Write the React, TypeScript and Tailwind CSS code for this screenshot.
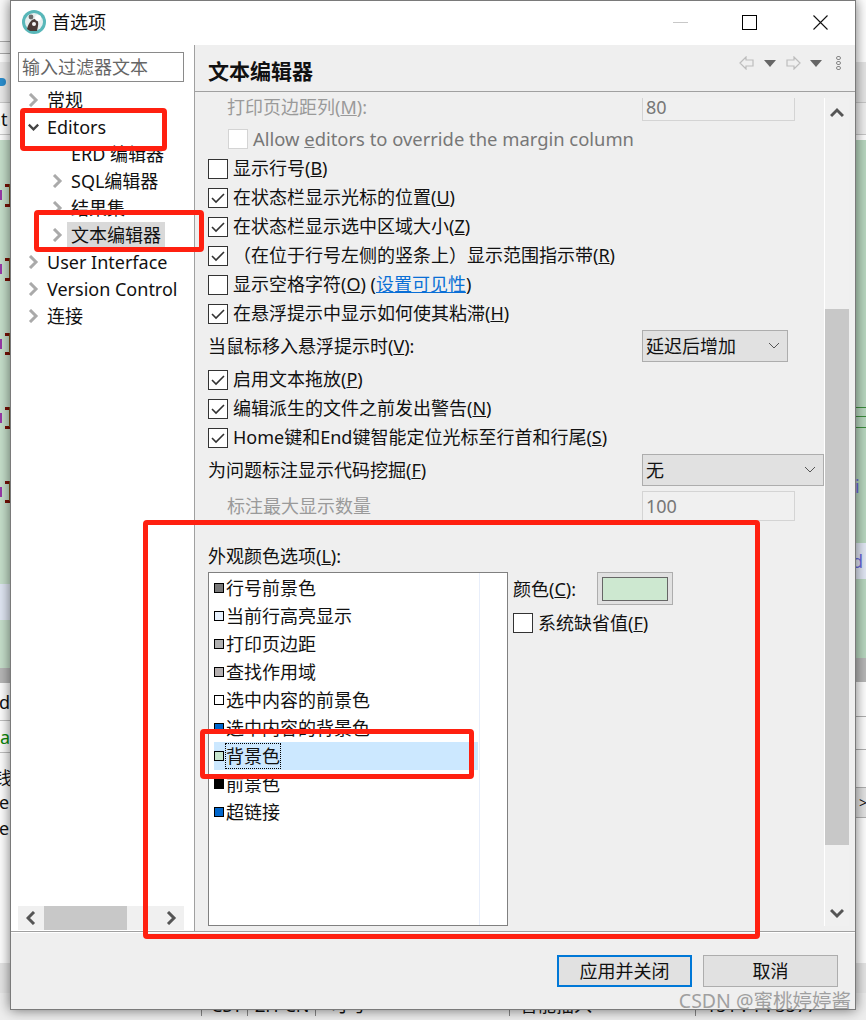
import React from "react";

const Chev = ({ dir = "right", color = "#aaaaaa", className = "" }: { dir?: "right" | "down" | "left" | "up"; color?: string; className?: string }) => {
  const pts = { right: "2,1 8,7 2,13", left: "8,1 2,7 8,13", down: "1,3 7,9 13,3", up: "1,9 7,3 13,9" }[dir];
  const horiz = dir === "right" || dir === "left";
  return (
    <svg width={horiz ? 11 : 14} height={horiz ? 14 : 12} viewBox={horiz ? "0 0 11 14" : "0 0 14 12"} className={className}>
      <polyline points={pts} fill="none" stroke={color} strokeWidth="3" />
    </svg>
  );
};

const Check = ({ checked = false, disabled = false }: { checked?: boolean; disabled?: boolean }) => (
  <span className={`flex w-[20px] h-[20px] shrink-0 items-center justify-center border bg-white ${disabled ? "border-[#d4d4d4] bg-[#f7f7f7]" : "border-[#333333]"}`}>
    {checked && (
      <svg width="14" height="12" viewBox="0 0 14 12">
        <polyline points="1,6 5,10 13,2" fill="none" stroke="#333333" strokeWidth="1.6" />
      </svg>
    )}
  </span>
);

const CheckRow = ({ checked, children }: { checked?: boolean; children: React.ReactNode }) => (
  <div className="flex h-[29px] items-center gap-[5px] text-[#111111] whitespace-nowrap">
    <Check checked={checked} />
    <span className="-mt-[2px]">{children}</span>
  </div>
);

const Select = ({ label, className }: { label: string; className: string }) => (
  <div className={`flex h-[32px] items-center justify-between border border-[#adadad] bg-[#e1e1e1] pl-[3px] pr-[7px] ${className}`}>
    <span>{label}</span>
    <svg width="12" height="8" viewBox="0 0 12 8">
      <polyline points="1,1 6,6 11,1" fill="none" stroke="#555555" strokeWidth="1" />
    </svg>
  </div>
);

const TreeRow = ({
  label, level = 1, chev = "right", selected = false,
}: { label: string; level?: 1 | 2; chev?: "right" | "down" | "none"; selected?: boolean }) => (
  <div className={`flex h-[27px] items-center gap-[4px] whitespace-nowrap text-[#111111] ${level === 1 ? "pl-[17px]" : "pl-[41px]"}`}>
    <span className="flex w-[11px] justify-center">
      {chev === "right" && <Chev color="#aaaaaa" />}
      {chev === "down" && <Chev dir="down" color="#444444" />}
    </span>
    <span className={`flex h-[25px] items-center px-[4px] ${selected ? "bg-[#d9d9d9]" : ""}`}>{label}</span>
  </div>
);

const colors: [string, string, boolean?][] = [
  ["行号前景色", "#787878"],
  ["当前行高亮显示", "#e8f2fe"],
  ["打印页边距", "#b0b0b0"],
  ["查找作用域", "#b5b0b0"],
  ["选中内容的前景色", "#ffffff"],
  ["选中内容的背景色", "#0066cc"],
  ["背景色", "#c7e6ce", true],
  ["前景色", "#000000"],
  ["超链接", "#0066cc"],
];

const ticks = [184, 204, 258, 278, 333, 352, 407, 426, 481, 500];
const pairs = [184, 258, 333, 407, 481];

const Backdrop = () => (
  <div className="absolute inset-0 flex flex-col bg-white">
    <div className="flex flex-1 justify-between">
      <div className="flex w-[10px] flex-col text-[#111111] overflow-hidden">
        <div className="h-[41px] bg-[#fafafa]" />
        <div className="h-[13px] border-y border-[#aaaaaa] bg-[#f5f5f5]" />
        <div className="h-[8px]" />
        <div className="flex h-[40px] items-center bg-[#ececec]"><span className="h-[8px] w-[6px] rounded-r-full bg-[#2a8fd0]" /></div>
        <div className="flex h-[33px] items-center border-y border-[#cccccc] pl-0"><span className="-ml-[9px]">at</span></div>
        <div className="h-[5px]" />
        <div className="relative flex h-[528px] flex-col bg-[#c7e0cc]">
          {ticks.map((t) => (
            <span key={t} className="absolute left-[5px] h-[3px] w-[5px] bg-[#7a1005]" style={{ top: t - 140 }} />
          ))}
          {pairs.map((t) => (
            <React.Fragment key={t}>
              <span className="absolute left-[9px] h-[20px] w-[1px] bg-[#7a5a20]" style={{ top: t - 140 }} />
              <span className="absolute left-0 h-[10px] w-[2px] bg-[#9a3aa8]" style={{ top: t - 134 }} />
            </React.Fragment>
          ))}
          <div className="mt-[444px] h-[36px] bg-[#e2e8f5]" />
        </div>
        <div className="h-[15px] bg-[#b8b8b8]" />
        <div className="flex h-[38px] items-center border-b border-[#c0c0c0]"><span className="-ml-[1px]">d</span></div>
        <div className="flex h-[32px] items-center border-b border-[#c0c0c0] text-[#0a8a0a]"><span className="-ml-[11px]">na</span></div>
        <div className="flex h-[88px] flex-col pt-[14px] leading-[26px]">
          <span className="-ml-[6px] h-[22px] leading-[22px]">钱</span>
          <span className="-ml-[1px]">e</span>
          <span className="-ml-[1px]">e</span>
        </div>
        <div className="h-[122px]" />
        <div className="h-[30px] bg-[#e6e6e6]" />
        <div className="flex-1 bg-[#eeeeee]" />
      </div>
      <div className="flex w-[10px] flex-col overflow-hidden text-[#111111]">
        <div className="h-[62px]" />
        <div className="h-[41px] border-b border-[#c8c8c8] bg-[#e6e6e6]" />
        <div className="h-[32px] border-b border-[#c8c8c8] bg-[#f0f0f0]" />
        <div className="h-[5px]" />
        <div className="flex h-[518px] flex-col bg-[#b9d8c0]">
          <div className="mt-[267px] h-[1px] bg-[#3c8c3c]" />
          <div className="mt-[8px] h-[1px] bg-[#3c8c3c]" />
          <div className="mt-[10px] h-[1px] bg-[#3c8c3c]" />
          <div className="mt-[43px] flex h-[30px] items-center text-[#6a6ae0]"><span className="-ml-[1px]">i</span></div>
          <div className="mt-[42px] flex h-[36px] items-center bg-[#e2e8f5] text-[#6a6ae0]"><span className="-ml-[4px]">d</span></div>
        </div>
        <div className="h-[24px] bg-[#b8b8b8]" />
        <div className="h-[35px] border-b border-[#b0b0b0]" />
        <div className="h-[33px] border-b border-[#b0b0b0]" />
        <div className="h-[37px]" />
        <div className="flex h-[31px] items-center border-y border-[#b0b0b0] bg-[#e4e4e4] text-[14px]"><span className="ml-[3px]">&gt;</span></div>
        <div className="h-[145px]" />
        <div className="h-[30px] bg-[#e6e6e6]" />
        <div className="flex-1 bg-[#eeeeee]" />
      </div>
    </div>
    <div className="-mt-[20px] flex h-[20px] items-start overflow-hidden bg-[#eeeeee] text-[#111111] leading-[10px] whitespace-nowrap">
      <span className="ml-[201px] h-[16px] w-[47px] border-x border-[#888888] pl-[9px]">CST</span>
      <span className="h-[16px] w-[68px] border-r border-[#888888] pl-[7px]">ZH-CN</span>
      <span className="h-[16px] w-[194px] border-r border-[#888888] pl-[14px]">可写</span>
      <span className="h-[16px] w-[186px] border-r border-[#888888] pl-[10px]">智能插入</span>
      <span className="h-[16px] pl-[10px]">151 : 1 : 3577</span>
    </div>
  </div>
);

const NavArrow = ({ flip = false }: { flip?: boolean }) => (
  <svg width="15" height="14" viewBox="0 0 15 14" className={flip ? "-scale-x-100" : ""}>
    <path d="M1 7 L7 1 V4 H14 V10 H7 V13 Z" fill="none" stroke="#bdbdbd" strokeWidth="1.2" />
  </svg>
);

const Tri = () => (
  <svg width="12" height="7" viewBox="0 0 12 7"><polygon points="0,0 12,0 6,7" fill="#666666" /></svg>
);

const Logo = () => (
  <svg width="24" height="24" viewBox="0 0 24 24">
    <circle cx="12" cy="12" r="12" fill="#58b7b9" />
    <circle cx="12" cy="12" r="9" fill="#e6eeee" />
    <path d="M5 19 C7 12 10 9 13 9 C15 9 17 12 16 16 L15 21 L8 21 Z" fill="#4a3a36" />
    <circle cx="16" cy="8" r="3" fill="#ffffff" />
    <circle cx="9" cy="7" r="2.4" fill="#6b6b6b" />
    <circle cx="12" cy="14" r="2" fill="#f5f5f5" />
  </svg>
);

const RedBox = ({ className }: { className: string }) => (
  <div className={`pointer-events-none absolute rounded-[4px] border-[5px] border-[#ff2010] ${className}`} />
);

export default function App() {
  return (
    <div className="relative h-[1020px] w-[866px] overflow-hidden bg-white font-['Noto_Sans','Noto_Sans_CJK_SC',sans-serif] text-[18px] leading-[24px]">
      <Backdrop />
      <div className="relative ml-[10px] flex h-[1010px] w-[846px] flex-col border border-[#7a7a7a] bg-white shadow-[0_0_12px_rgba(0,0,0,0.55)]">
        {/* title bar */}
        <div className="flex h-[44px] shrink-0 items-center pb-[2px] pl-[11px] text-[#111111]">
          <Logo />
          <span className="ml-[6px]">首选项</span>
          <div className="ml-auto flex items-center">
            <span className="mr-[54px] h-[1px] w-[15px] bg-[#c8c8c8]" />
            <span className="mr-[56px] h-[15px] w-[15px] border-[1.5px] border-black" />
            <svg width="15" height="15" viewBox="0 0 15 15" className="mr-[27px]">
              <path d="M0.5 0.5 L14.5 14.5 M14.5 0.5 L0.5 14.5" stroke="#111111" strokeWidth="1.1" />
            </svg>
          </div>
        </div>

        {/* body */}
        <div className="flex h-[886px] shrink-0">
          {/* left */}
          <div className="flex w-[184px] shrink-0 flex-col border-r border-[#a0a0a0] pt-[7px]">
            <div className="mx-[7px] flex h-[30px] w-[166px] items-center border border-[#8a8a8a] pl-[3px] text-[#666666]">输入过滤器文本</div>
            <div className="mt-[4px] flex flex-col">
              <TreeRow label="常规" />
              <TreeRow label="Editors" chev="down" />
              <TreeRow label="ERD 编辑器" level={2} chev="none" />
              <TreeRow label="SQL编辑器" level={2} />
              <TreeRow label="结果集" level={2} />
              <TreeRow label="文本编辑器" level={2} selected />
              <TreeRow label="User Interface" />
              <TreeRow label="Version Control" />
              <TreeRow label="连接" />
            </div>
            <div className="mx-[7px] mb-[1px] mt-auto flex h-[24px] w-[166px] bg-[#f0f0f0]">
              <span className="flex w-[26px] items-center justify-center"><Chev dir="left" color="#555555" /></span>
              <span className="w-[83px] bg-[#c8c8c8]" />
              <span className="ml-auto flex w-[26px] items-center justify-center"><Chev dir="right" color="#555555" /></span>
            </div>
          </div>

          {/* right */}
          <div className="flex min-w-0 flex-1 flex-col bg-[#efefef] text-[#111111]">
            <div className="flex h-[47px] shrink-0 items-center border-b border-[#a0a0a0] pl-[13px]">
              <span className="mt-[6px] text-[21px] font-bold">文本编辑器</span>
              <div className="mb-[10px] ml-auto mr-[14px] flex items-center">
                <NavArrow />
                <span className="ml-[10px] mr-[10px] flex"><Tri /></span>
                <NavArrow flip />
                <span className="ml-[9px] mr-[14px] flex"><Tri /></span>
                <span className="flex flex-col gap-[1px]">
                  <span className="h-[4px] w-[5px] rounded-full border border-[#888888]" />
                  <span className="h-[4px] w-[5px] rounded-full border border-[#888888]" />
                  <span className="h-[4px] w-[5px] rounded-full border border-[#888888]" />
                </span>
              </div>
            </div>
            <div className="mt-[6px] flex h-[828px] shrink-0 pr-[6px]">
              <div className="flex min-w-0 flex-1 flex-col overflow-hidden pl-[13px]">
                <div className="-mt-[7px] flex h-[30px] shrink-0 items-center pl-[20px] text-[#9a9a9a]">
                  <span className="-ml-[1px] w-[415px] pt-[2px]">打印页边距列(<u>M</u>):</span>
                  <div className="flex h-[30px] w-[153px] items-center border border-[#d4d4d4] bg-[#f0f0f0] pl-[3px] pt-[2px] text-[#777777]">80</div>
                </div>
                <div className="mt-[3px] flex h-[30px] shrink-0 items-center gap-[5px] pl-[20px] text-[#777777] whitespace-nowrap">
                  <Check disabled />
                  <span className="text-[18.4px]">Allow <u>e</u>ditors to override the margin column</span>
                </div>
                <CheckRow>显示行号(<u>B</u>)</CheckRow>
                <CheckRow checked>在状态栏显示光标的位置(<u>U</u>)</CheckRow>
                <CheckRow checked>在状态栏显示选中区域大小(<u>Z</u>)</CheckRow>
                <CheckRow checked>（在位于行号左侧的竖条上）显示范围指示带(<u>R</u>)</CheckRow>
                <CheckRow>显示空格字符(<u>O</u>) (<span className="text-[#0a6fd6] underline">设置可见性</span>)</CheckRow>
                <CheckRow checked>在悬浮提示中显示如何使其粘滞(<u>H</u>)</CheckRow>
                <div className="mt-[2px] flex h-[32px] shrink-0 items-center">
                  <span className="w-[434px]">当鼠标移入悬浮提示时(<u>V</u>):</span>
                  <Select label="延迟后增加" className="w-[146px]" />
                </div>
                <div className="mt-[3px] flex flex-col">
                  <CheckRow checked>启用文本拖放(<u>P</u>)</CheckRow>
                  <CheckRow checked>编辑派生的文件之前发出警告(<u>N</u>)</CheckRow>
                  <CheckRow checked>Home键和End键智能定位光标至行首和行尾(<u>S</u>)</CheckRow>
                </div>
                <div className="mt-[2px] flex h-[32px] shrink-0 items-center">
                  <span className="w-[434px]">为问题标注显示代码挖掘(<u>F</u>)</span>
                  <Select label="无" className="w-[182px]" />
                </div>
                <div className="mt-[5px] flex h-[30px] shrink-0 items-center pl-[20px] text-[#9a9a9a]">
                  <span className="-ml-[1px] w-[415px]">标注最大显示数量</span>
                  <div className="flex h-[30px] w-[153px] items-center border border-[#d4d4d4] bg-[#f0f0f0] pl-[3px] text-[#777777]">100</div>
                </div>
                <div className="mt-[20px] flex h-[29px] shrink-0 items-center">外观颜色选项(<u>L</u>):</div>
                <div className="mt-[2px] flex min-h-0 flex-1">
                  <div className="relative h-[354px] w-[300px] border border-[#808080] bg-white pl-[5px] pt-[1px]">
                    <div className="absolute bottom-0 right-[27px] top-0 w-[1px] bg-[#e8eefa]" />
                    {colors.map(([label, color, sel]) => (
                      <div key={label} className={`relative flex h-[28px] w-[264px] items-center whitespace-nowrap ${sel ? "bg-[#cce8ff]" : ""}`}>
                        <span className="h-[10px] w-[10px] shrink-0 border border-black" style={{ backgroundColor: color }} />
                        <span className={`flex h-[26px] items-center ${sel ? "ml-[1px] border border-dotted border-black" : "ml-[2px]"}`}>{label}</span>
                      </div>
                    ))}
                  </div>
                  <div className="ml-[5px] flex flex-col">
                    <div className="flex h-[33px] items-center">
                      <span className="w-[84px]">颜色(<u>C</u>):</span>
                      <div className="flex h-[33px] w-[76px] items-center justify-center border border-[#adadad] bg-[#e1e1e1]">
                        <span className="h-[24px] w-[66px] border border-[#666666] bg-[#cde8d0]" />
                      </div>
                    </div>
                    <div className="mt-[8px] flex h-[20px] items-center gap-[5px]">
                      <Check />
                      <span>系统缺省值(<u>F</u>)</span>
                    </div>
                  </div>
                </div>
              </div>
              <div className="flex w-[25px] shrink-0 flex-col border-l border-white bg-[#f0f0f0]">
                <span className="flex h-[30px] items-center justify-center"><Chev dir="up" color="#555555" /></span>
                <span className="h-[181px]" />
                <span className="h-[536px] bg-[#c8c8c8]" />
                <span className="mt-auto flex h-[26px] items-center justify-center"><Chev dir="down" color="#555555" /></span>
              </div>
            </div>
          </div>
        </div>

        {/* footer */}
        <div className="relative flex flex-1 justify-end gap-[11px] border-t border-[#a0a0a0] bg-[#efefef] pr-[17px] pt-[23px] text-[#111111] shadow-[inset_0_1px_0_#ffffff]">
          <button className="flex h-[32px] w-[135px] items-center justify-center border-2 border-[#0078d7] bg-[#e1e1e1]">应用并关闭</button>
          <button className="flex h-[32px] w-[135px] items-center justify-center border border-[#adadad] bg-[#e1e1e1]">取消</button>
          <span className="absolute bottom-[-4px] right-[4px] text-[19.5px] text-[#8c8c8c] opacity-80 whitespace-nowrap">CSDN @蜜桃婷婷酱</span>
        </div>
      </div>

      <RedBox className="left-[20px] top-[108px] h-[43px] w-[147px]" />
      <RedBox className="left-[34px] top-[210px] h-[42px] w-[170px]" />
      <RedBox className="left-[143px] top-[520px] h-[419px] w-[617px]" />
      <RedBox className="left-[200px] top-[729px] h-[50px] w-[274px]" />
    </div>
  );
}
